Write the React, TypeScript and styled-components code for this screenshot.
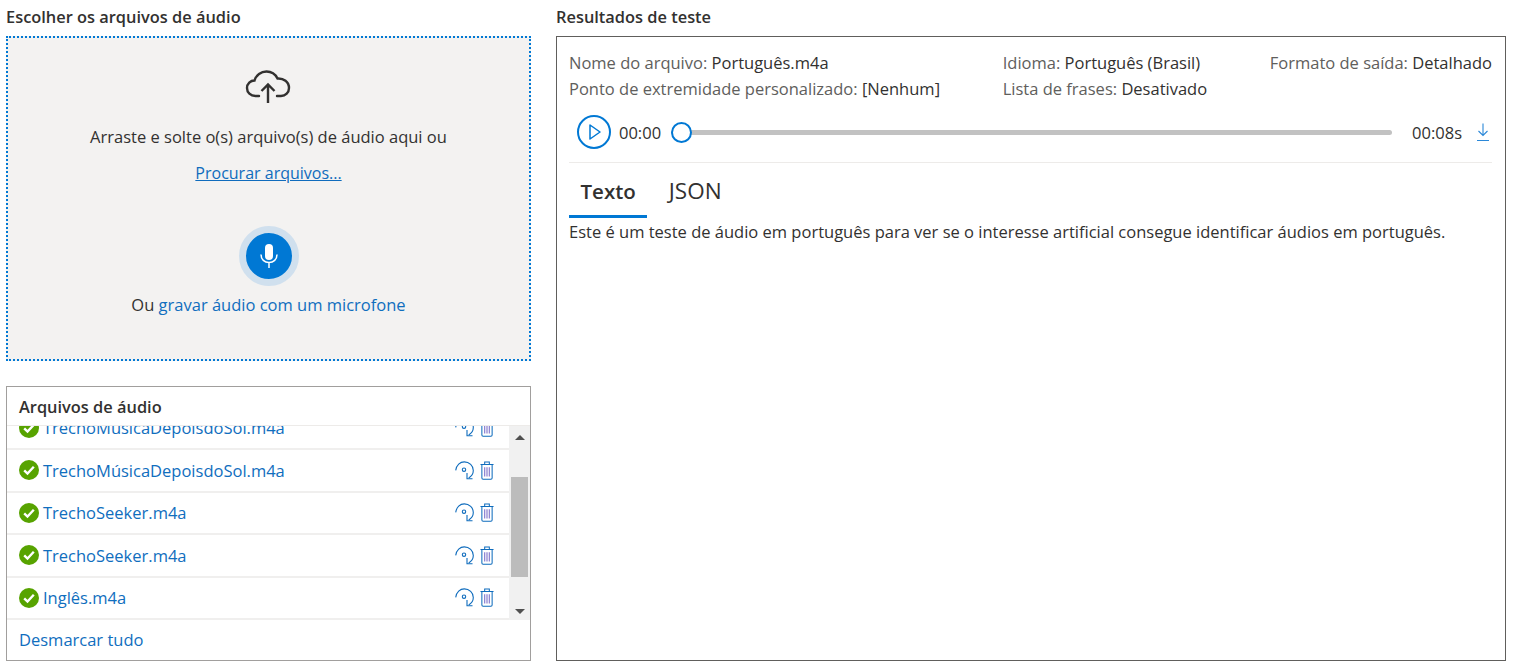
import React from 'react';
import styled, { createGlobalStyle } from 'styled-components';

const GlobalStyle = createGlobalStyle`
    html, body {
        margin: 0;
        padding: 0;
        background: #fff;
        overflow: hidden;
    }
    body {
        font-family: "Open Sans", "Liberation Sans", sans-serif;
        font-size: 16.500px;
        color: #323130;
    }
`;

const files = [
    'TrechoMúsicaDepoisdoSol.m4a',
    'TrechoMúsicaDepoisdoSol.m4a',
    'TrechoSeeker.m4a',
    'TrechoSeeker.m4a',
    'Inglês.m4a',
];

const CloudIcon = () => (
    <svg width="46" height="34" viewBox="0 0 46 34" fill="none" stroke="#323130" strokeWidth="2.400">
        <path d="M14 26H10.500C5.500 26 2 22.500 2 18C2 13.500 5.500 10.500 9.500 10.500C11 5 16 1.500 21.500 1.500C26.500 1.500 30.500 4.500 32.500 8.500C38.500 8 44 12 44 18C44 22.500 40.500 26 36 26H32" strokeLinecap="round" />
        <path d="M23 33V15M16.500 21L23 14.500L29.500 21" />
    </svg>
);

const MicIcon = () => (
    <svg width="20" height="26" viewBox="0 0 20 26" fill="none">
        <rect x="6" y="1" width="8" height="16" rx="4" fill="#fff" />
        <path d="M2 11.500C2 16.500 5.500 19.500 10 19.500C14.500 19.500 18 16.500 18 11.500M10 19.500V25" stroke="#fff" strokeWidth="1.500" />
    </svg>
);

const CheckIcon = () => (
    <svg width="20" height="20" viewBox="0 0 20 20">
        <circle cx="10" cy="10" r="10" fill="#57a300" />
        <path d="M5.200 10.300L8.500 13.500L14.800 6.800" fill="none" stroke="#fff" strokeWidth="2.400" />
    </svg>
);

const ReprocessIcon = () => (
    <svg width="19" height="19" viewBox="0 0 19 19" fill="none" stroke="#0f6cbd" strokeWidth="1.100">
        <path d="M0.700 9.300C1.500 4.300 5 0.900 9.300 0.900C14.300 0.900 18.300 4.800 18.300 9.500C18.300 12.600 16.500 15.300 13.700 17" />
        <path d="M12 12V17.700H17.500" />
        <circle cx="9" cy="8.700" r="1.700" />
    </svg>
);

const TrashIcon = () => (
    <svg width="14" height="19" viewBox="0 0 15 20" fill="none" stroke="#0f6cbd" strokeWidth="1.100">
        <path d="M0.500 3.500H14.500M5 3.500V1H10V3.500" />
        <path d="M2 3.500V18C2 18.800 2.500 19.300 3.300 19.300H11.700C12.500 19.300 13 18.800 13 18V3.500" />
        <path d="M5 6.500V16.500M7.500 6.500V16.500M10 6.500V16.500" stroke="#8a7fd0" strokeWidth="1.300" />
    </svg>
);

const PlayIcon = () => (
    <svg width="12" height="16" viewBox="0 0 12 16" fill="none" stroke="#0078d4" strokeWidth="1.500">
        <path d="M1 1L11 8L1 15Z" strokeLinejoin="round" />
    </svg>
);

const DownloadIcon = () => (
    <svg width="14" height="19" viewBox="0 0 14 19" fill="none" stroke="#2b88d8" strokeWidth="1.100">
        <path d="M7 0.500V12.500M2.500 8L7 12.500L11.500 8M1 17.500H13" />
    </svg>
);

const App = () => {
    return (
        <Page>
            <GlobalStyle />
            <LeftColumn>
                <Heading>Escolher os arquivos de áudio</Heading>
                <DropZone>
                    <CloudSlot><CloudIcon /></CloudSlot>
                    <DropText>Arraste e solte o(s) arquivo(s) de áudio aqui ou</DropText>
                    <BrowseLink>Procurar arquivos...</BrowseLink>
                    <MicButton><MicIcon /></MicButton>
                    <RecordText>Ou <Link>gravar áudio com um microfone</Link></RecordText>
                </DropZone>
                <FilesPanel>
                    <FilesTitle>Arquivos de áudio</FilesTitle>
                    <FilesBody>
                        <Viewport>
                            <FileList>
                                {files.map((name, i) => (
                                    <FileRow key={i}>
                                        <FileInfo>
                                            <CheckIcon />
                                            <FileName>{name}</FileName>
                                        </FileInfo>
                                        <RowActions>
                                            <ReprocessIcon />
                                            <TrashIcon />
                                        </RowActions>
                                    </FileRow>
                                ))}
                            </FileList>
                        </Viewport>
                        <ScrollBar>
                            <ArrowUp />
                            <ScrollTrack><ScrollThumb /></ScrollTrack>
                            <ArrowDown />
                        </ScrollBar>
                    </FilesBody>
                    <FilesFooter>Desmarcar tudo</FilesFooter>
                </FilesPanel>
            </LeftColumn>
            <RightColumn>
                <Heading>Resultados de teste</Heading>
                <ResultPanel>
                    <MetaRow>
                        <MetaColumn>
                            <MetaLine><MetaLabel>Nome do arquivo:</MetaLabel> Português.m4a</MetaLine>
                            <MetaLine><MetaLabel>Ponto de extremidade personalizado:</MetaLabel> [Nenhum]</MetaLine>
                        </MetaColumn>
                        <MetaColumn>
                            <MetaLine><MetaLabel>Idioma:</MetaLabel> Português (Brasil)</MetaLine>
                            <MetaLine><MetaLabel>Lista de frases:</MetaLabel> Desativado</MetaLine>
                        </MetaColumn>
                        <MetaColumn>
                            <MetaLine><MetaLabel>Formato de saída:</MetaLabel> Detalhado</MetaLine>
                        </MetaColumn>
                    </MetaRow>
                    <Player>
                        <PlayButton><PlayIcon /></PlayButton>
                        <Time>00:00</Time>
                        <Slider><SliderThumb /></Slider>
                        <Time>00:08s</Time>
                        <DownloadSlot><DownloadIcon /></DownloadSlot>
                    </Player>
                    <Tabs>
                        <Tab $active>Texto</Tab>
                        <Tab>JSON</Tab>
                    </Tabs>
                    <Transcript>Este é um teste de áudio em português para ver se o interesse artificial consegue identificar áudios em português.</Transcript>
                </ResultPanel>
            </RightColumn>
        </Page>
    );
};

export default App;

const Page = styled.div`
    width: 1517px;
    height: 670px;
    box-sizing: border-box;
    padding: 7px 11px 9px 6px;
    display: flex;
    gap: 25px;
`;

const LeftColumn = styled.div`
    width: 525px;
    display: flex;
    flex-direction: column;
`;

const RightColumn = styled.div`
    flex: 1;
    display: flex;
    flex-direction: column;
`;

const Heading = styled.div`
    height: 22px;
    margin-bottom: 7px;
    line-height: 20px;
    font-size: 16.400px;
    font-weight: 600;
    color: #323130;
`;

const DropZone = styled.div`
    height: 325px;
    box-sizing: border-box;
    background: #f3f2f1;
    border: 2px dotted #0078d4;
    display: flex;
    flex-direction: column;
    align-items: center;
    margin-bottom: 25px;
`;

const CloudSlot = styled.div`
    height: 34px;
    margin-top: 32px;
    margin-left: -1px;
`;

const DropText = styled.div`
    margin-top: 22px;
    line-height: 22px;
`;

const BrowseLink = styled.a`
    margin-top: 14px;
    line-height: 22px;
    font-size: 16px;
    color: #0f6cbd;
    text-decoration: underline;
`;

const MicButton = styled.div`
    margin-top: 42px;
    width: 46px;
    height: 46px;
    border-radius: 50%;
    background: #0078d4;
    border: 7px solid #d0e0ee;
    display: flex;
    align-items: center;
    justify-content: center;
`;

const RecordText = styled.div`
    margin-top: 8px;
    line-height: 22px;
`;

const Link = styled.span`
    color: #106ebe;
`;

const FilesPanel = styled.div`
    flex: 1;
    min-height: 0;
    border: 1px solid #a19f9d;
    display: flex;
    flex-direction: column;
`;

const FilesTitle = styled.div`
    height: 39px;
    flex: none;
    box-sizing: border-box;
    padding: 10px 12px 0;
    line-height: 20px;
    font-size: 16.400px;
    font-weight: 600;
    border-bottom: 1px solid #edebe9;
`;

const FilesBody = styled.div`
    height: 194px;
    flex: none;
    display: flex;
`;

const Viewport = styled.div`
    flex: 1;
    overflow: hidden;
`;

const FileList = styled.div`
    margin-top: -18.500px;
`;

const FileRow = styled.div`
    height: 42.500px;
    box-sizing: border-box;
    padding: 0 15px 0 12px;
    border-bottom: 2px solid #f0efee;
    display: flex;
    align-items: center;
    justify-content: space-between;
`;

const FileInfo = styled.div`
    display: flex;
    align-items: center;
    gap: 4px;
`;

const FileName = styled.span`
    color: #106ebe;
`;

const RowActions = styled.div`
    display: flex;
    align-items: center;
    gap: 6px;
`;

const ScrollBar = styled.div`
    width: 21px;
    flex: none;
    background: #f1f1f1;
    display: flex;
    flex-direction: column;
    align-items: center;
    justify-content: space-between;
    padding: 9px 0 6px;
    box-sizing: border-box;
`;

const ArrowUp = styled.div`
    width: 0;
    height: 0;
    border-left: 5px solid transparent;
    border-right: 5px solid transparent;
    border-bottom: 5px solid #505050;
`;

const ArrowDown = styled.div`
    width: 0;
    height: 0;
    border-left: 5px solid transparent;
    border-right: 5px solid transparent;
    border-top: 5px solid #505050;
`;

const ScrollTrack = styled.div`
    flex: 1;
    width: 100%;
    padding-top: 37px;
    box-sizing: border-box;
`;

const ScrollThumb = styled.div`
    width: 17px;
    height: 100px;
    margin: 0 auto;
    background: #bcbcbc;
`;

const FilesFooter = styled.div`
    flex: 1;
    padding: 0 12px 2px;
    display: flex;
    align-items: center;
    color: #106ebe;
`;

const ResultPanel = styled.div`
    flex: 1;
    min-height: 0;
    border: 1px solid #605e5c;
    padding: 13px 13px 0 12px;
    display: flex;
    flex-direction: column;
`;

const MetaRow = styled.div`
    display: flex;
    justify-content: space-between;
`;

const MetaColumn = styled.div`
    display: flex;
    flex-direction: column;
`;

const MetaLine = styled.div`
    line-height: 26px;
    white-space: nowrap;
`;

const MetaLabel = styled.span`
    color: #605e5c;
`;

const Player = styled.div`
    height: 61px;
    box-sizing: border-box;
    padding: 0 2px 0 8px;
    display: flex;
    align-items: center;
    border-bottom: 1px solid #edebe9;
`;

const PlayButton = styled.div`
    width: 34px;
    height: 34px;
    box-sizing: border-box;
    border: 2px solid #0078d4;
    border-radius: 50%;
    display: flex;
    align-items: center;
    justify-content: center;
    padding-left: 2px;
    margin-right: 8px;
`;

const Time = styled.span`
    white-space: nowrap;
`;

const Slider = styled.div`
    flex: 1;
    height: 5px;
    margin: 0 20px 0 10px;
    background: #c2c2c2;
    border-radius: 3px;
    position: relative;
`;

const SliderThumb = styled.div`
    position: absolute;
    left: 0;
    top: -8px;
    width: 21px;
    height: 21px;
    box-sizing: border-box;
    background: #fff;
    border: 2px solid #0078d4;
    border-radius: 50%;
`;

const DownloadSlot = styled.div`
    margin-left: 14px;
    display: flex;
`;

const Tabs = styled.div`
    display: flex;
    gap: 10px;
    height: 55px;
    box-sizing: border-box;
`;

const Tab = styled.div<{ $active?: boolean }>`
    padding: 3px 11.500px 0;
    height: 100%;
    box-sizing: border-box;
    display: flex;
    align-items: center;
    font-size: ${(p) => (p.$active ? 20.500 : 22.500)}px;
    font-weight: ${(p) => (p.$active ? 600 : 400)};
    border-bottom: 3px solid ${(p) => (p.$active ? '#0078d4' : 'transparent')};
    color: #323130;
`;

const Transcript = styled.div`
    margin-top: 3px;
    line-height: 22px;
`;
